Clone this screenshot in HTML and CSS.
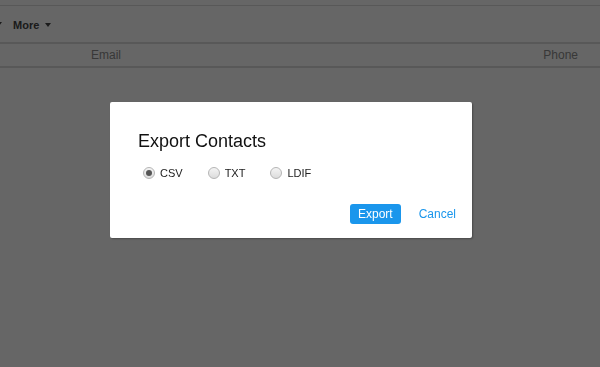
FILE: index.html
```html
<!DOCTYPE html>
<html lang="en">
<head>
    <meta charset="UTF-8">
    <title>Contacts</title>
    <link rel="stylesheet" href="styles.css">
</head>
<body>
    <div class="page">
        <div class="toolbar">
            <span class="caret stray"></span>
            <span class="menu">More <span class="caret"></span></span>
        </div>
        <div class="table-head">
            <span class="col-email">Email</span>
            <span class="col-phone">Phone</span>
        </div>
    </div>

    <div class="overlay">
        <div class="modal">
            <h2>Export Contacts</h2>
            <div class="formats">
                <label class="option"><input type="radio" name="format" checked><span class="dot"></span>CSV</label>
                <label class="option"><input type="radio" name="format"><span class="dot"></span>TXT</label>
                <label class="option"><input type="radio" name="format"><span class="dot"></span>LDIF</label>
            </div>
            <div class="actions">
                <button class="btn-export">Export</button>
                <a class="btn-cancel" href="#">Cancel</a>
            </div>
        </div>
    </div>
</body>
</html>
```

FILE: styles.css
```css
body {
    margin: 0;
    font-family: "Liberation Sans", Arial, sans-serif;
    background: #fff;
    width: 600px;
    height: 367px;
    overflow: hidden;
}

.page {
    border-top: 1px solid #dcdcdc;
    margin-top: 5px;
}

.toolbar {
    height: 36px;
    display: flex;
    align-items: center;
    border-bottom: 2px solid #dcdcdc;
    font-size: 11px;
    font-weight: bold;
    color: #444;
}

.stray {
    margin-left: -4px;
    margin-right: 11px;
}

.menu {
    display: flex;
    align-items: center;
    gap: 6px;
    padding-top: 2px;
}

.caret {
    display: inline-block;
    width: 0;
    height: 0;
    border-left: 3px solid transparent;
    border-right: 3px solid transparent;
    border-top: 4px solid #444;
}

.table-head {
    height: 22px;
    display: flex;
    align-items: center;
    border-bottom: 2px solid #dcdcdc;
    font-size: 12px;
    color: #8c8c8c;
}

.col-email {
    margin-left: 91px;
}

.col-phone {
    margin-left: auto;
    margin-right: 22px;
}

.overlay {
    position: fixed;
    inset: 0;
    background: rgba(0, 0, 0, 0.6);
}

.modal {
    position: absolute;
    left: 110px;
    top: 102px;
    width: 362px;
    height: 136px;
    box-sizing: border-box;
    background: #fff;
    border-radius: 2px;
    box-shadow: 1px 1px 2px rgba(0, 0, 0, 0.3);
    padding: 28px 16px 0 28px;
}

h2 {
    margin: 0;
    font-size: 18px;
    font-weight: normal;
    color: #111;
    line-height: 22px;
}

.formats {
    display: flex;
    gap: 20px;
    margin-top: 15px;
    font-size: 11px;
    color: #222;
}

.option {
    display: flex;
    align-items: center;
}

.option input {
    display: none;
}

.dot {
    width: 12px;
    height: 12px;
    border-radius: 50%;
    border: 1px solid #b5b5b5;
    background: linear-gradient(#f4f4f4, #dcdcdc);
    margin: 0 5px 0 5px;
    box-sizing: border-box;
    display: flex;
    align-items: center;
    justify-content: center;
}

.option input:checked + .dot::after {
    content: "";
    width: 6px;
    height: 6px;
    border-radius: 50%;
    background: #555;
}

.actions {
    display: flex;
    justify-content: flex-end;
    align-items: center;
    margin-top: 25px;
    gap: 18px;
}

.btn-export {
    background: #1a96ec;
    color: #fff;
    border: none;
    border-radius: 3px;
    font-family: inherit;
    font-size: 12px;
    padding: 0 8px;
    height: 20px;
}

.btn-cancel {
    color: #1a96ec;
    text-decoration: none;
    font-size: 12px;
}
```
